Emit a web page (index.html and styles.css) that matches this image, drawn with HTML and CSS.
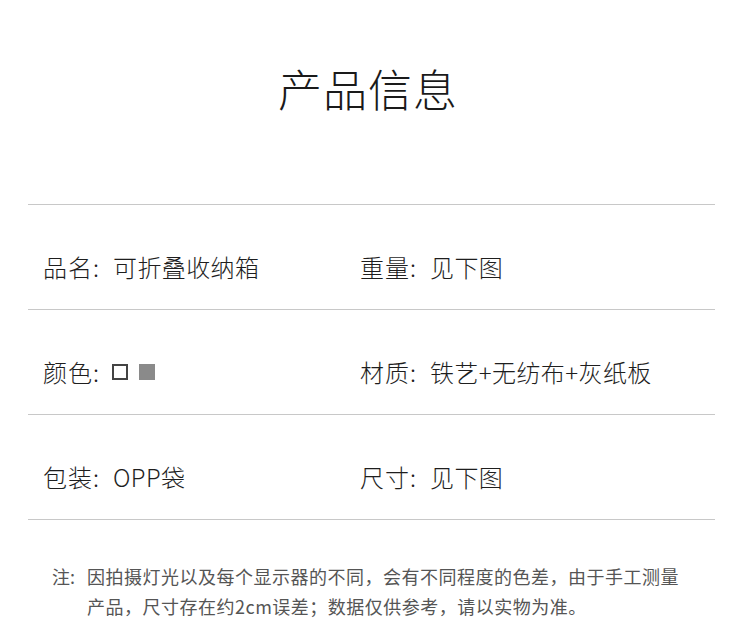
FILE: index.html
```html
<!DOCTYPE html>
<html lang="zh-CN">
<head>
<meta charset="utf-8">
<title>产品信息</title>
<link rel="stylesheet" href="styles.css">
</head>
<body>
<div class="page">
  <h1 class="title">产品信息</h1>
  <div class="table">
    <div class="row">
      <div class="cell left"><span class="label">品名:</span><span class="value">可折叠收纳箱</span></div>
      <div class="cell right"><span class="label">重量:</span><span class="value">见下图</span></div>
    </div>
    <div class="row">
      <div class="cell left"><span class="label">颜色:</span><span class="value swatches"><span class="sw sw-white"></span><span class="sw sw-gray"></span></span></div>
      <div class="cell right"><span class="label">材质:</span><span class="value">铁艺+无纺布+灰纸板</span></div>
    </div>
    <div class="row">
      <div class="cell left"><span class="label">包装:</span><span class="value">OPP袋</span></div>
      <div class="cell right"><span class="label">尺寸:</span><span class="value">见下图</span></div>
    </div>
  </div>
  <div class="note">
    <span class="note-label">注:</span>
    <p class="note-text">因拍摄灯光以及每个显示器的不同，会有不同程度的色差，由于手工测量产品，尺寸存在约2cm误差；数据仅供参考，请以实物为准。</p>
  </div>
</div>
</body>
</html>
```

FILE: styles.css
```css
html, body {
  margin: 0;
  padding: 0;
  background: #ffffff;
}
body {
  font-family: "Noto Sans CJK SC", "Noto Sans", sans-serif;
  color: #222222;
}
.page {
  width: 750px;
  height: 629px;
  overflow: hidden;
}
.title {
  margin: 0;
  height: 204px;
  box-sizing: border-box;
  padding: 60px 14px 0 0;
  text-align: center;
  font-size: 44px;
  line-height: 56px;
  font-weight: 300;
  letter-spacing: 1px;
  color: #1a1a1a;
}
.table {
  margin: 0 35px 0 28px;
  border-top: 1px solid #c8c8c8;
}
.row {
  display: flex;
  height: 104px;
  border-bottom: 1px solid #c8c8c8;
}
.cell {
  padding-top: 48px;
  font-size: 24px;
  line-height: 28px;
  height: 28px;
  font-weight: 300;
  color: #1e1e1e;
  display: flex;
  align-items: center;
}
.left {
  width: 317px;
  padding-left: 15px;
}
.right {
  flex: 1;
}
.label {
  letter-spacing: 1px;
}
.value {
  margin-left: 13px;
  letter-spacing: 0.4px;
}
.swatches {
  display: flex;
  align-items: center;
  margin-left: 12px;
}
.sw {
  display: inline-block;
  width: 16px;
  height: 16px;
  box-sizing: border-box;
}
.sw-white {
  border: 2px solid #444444;
  margin-right: 11px;
}
.sw-gray {
  background: #8a8a8a;
}
.note {
  display: flex;
  padding: 41px 0 0 52px;
  font-size: 18px;
  line-height: 30px;
  color: #555555;
}
.note-label {
  width: 35px;
  flex: none;
}
.note-text {
  margin: 0;
  width: 600px;
  letter-spacing: 0.5px;
}
```
